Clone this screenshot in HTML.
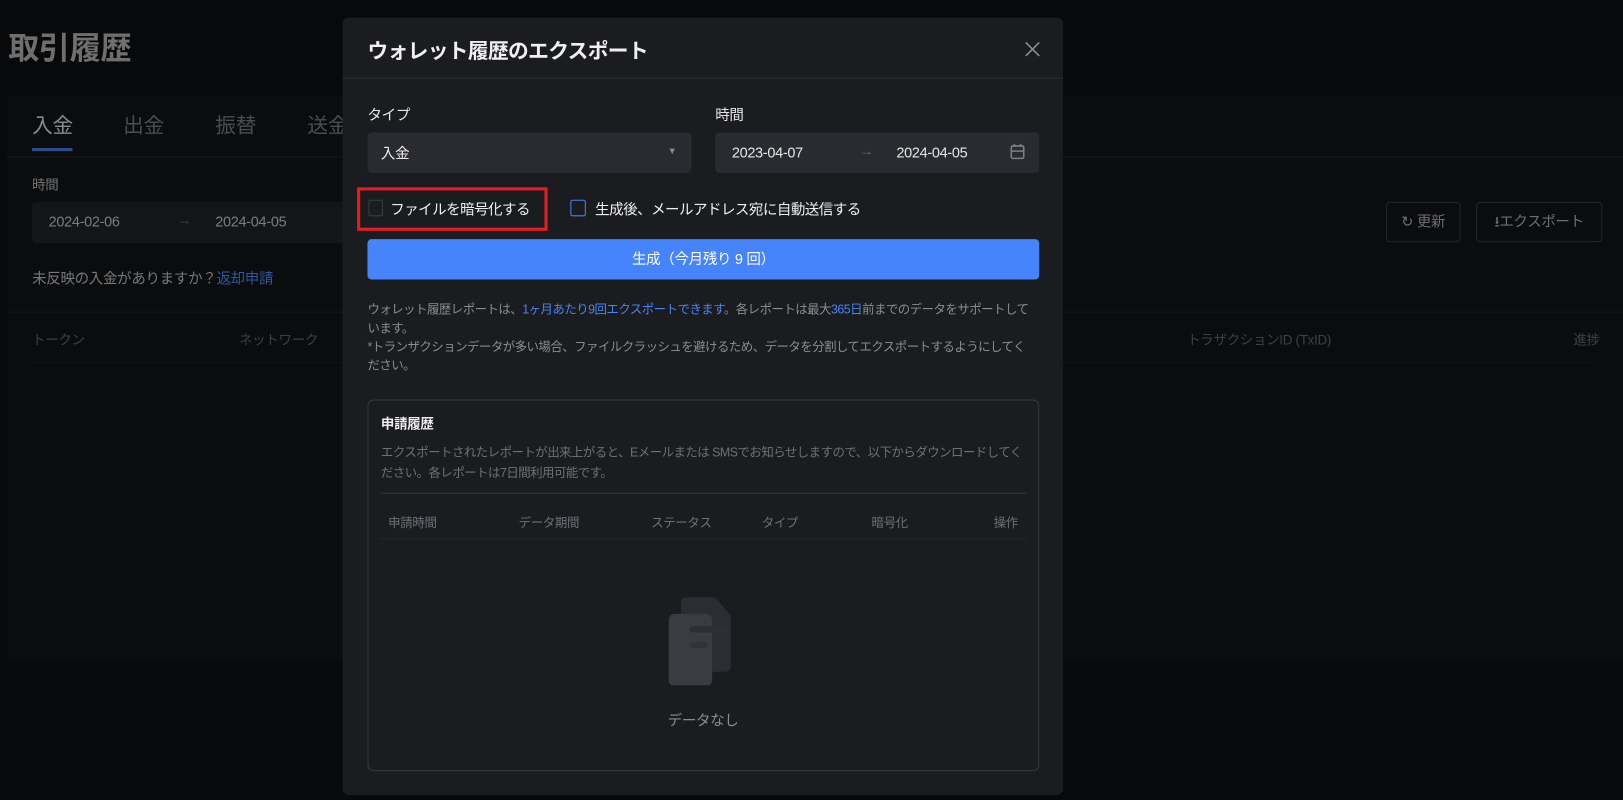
<!DOCTYPE html>
<html><head><meta charset="utf-8"><style>
*{box-sizing:border-box;margin:0;padding:0}
body{width:1623px;height:800px;background:#08090a;font-family:"Liberation Sans","Noto Sans CJK JP",sans-serif;color:#888;overflow:hidden;letter-spacing:-0.3px}
#w{position:relative;width:1568px;height:773px;transform:scale(1.0351);transform-origin:0 0}
.abs{position:absolute}
.panel{left:7px;top:92px;width:1570px;height:546px;background:#0b0c0e;border-radius:6px}
.modal{left:331px;top:17px;width:696px;height:751px;background:#1b1c20;border-radius:6px}
.in{background:#2a2b30;border-radius:4px}
</style></head><body><div id="w">
<div class="abs" style="left:8px;top:22px;font-size:30px;font-weight:bold;color:#6f6f70">取引履歴</div>
<div class="abs panel"></div>
<div class="abs" style="left:31px;top:105px;font-size:20px;color:#8a8a8a">入金</div>
<div class="abs" style="left:31px;top:143px;width:39px;height:3px;background:#2f4c8a"></div>
<div class="abs" style="left:119px;top:105px;font-size:20px;color:#4a4c50">出金</div>
<div class="abs" style="left:208px;top:105px;font-size:20px;color:#4a4c50">振替</div>
<div class="abs" style="left:297px;top:105px;font-size:20px;color:#4a4c50">送金</div>
<div class="abs" style="left:7px;top:151px;width:1570px;height:1px;background:#16171a"></div>
<div class="abs" style="left:31px;top:168px;font-size:13px;color:#777">時間</div>
<div class="abs" style="left:31px;top:195px;width:310px;height:40px;background:#141518;border-radius:4px"></div>
<div class="abs" style="left:47px;top:206px;font-size:14px;color:#7c7c7c">2024-02-06</div>
<div class="abs" style="left:171px;top:204px;font-size:14px;color:#444">→</div>
<div class="abs" style="left:208px;top:206px;font-size:14px;color:#7c7c7c">2024-04-05</div>
<div class="abs" style="left:31px;top:259px;font-size:14px;color:#777">未反映の入金がありますか？<span style="color:#2f57a3">返却申請</span></div>
<div class="abs" style="left:7px;top:301px;width:1570px;height:1px;background:#16171a"></div>
<div class="abs" style="left:31px;top:318px;font-size:13px;color:#3e4044">トークン</div>
<div class="abs" style="left:231px;top:318px;font-size:13px;color:#3e4044">ネットワーク</div>
<div class="abs" style="left:1147px;top:318px;font-size:13px;color:#3e4044">トラザクションID (TxID)</div>
<div class="abs" style="left:1520px;top:318px;font-size:13px;color:#3e4044">進捗</div>
<div class="abs" style="left:31px;top:350px;width:1512px;height:1px;background:#131416"></div>
<div class="abs" style="left:1339px;top:195px;width:72px;height:39px;border:1px solid #222428;border-radius:4px;font-size:14px;color:#6e6e6e;line-height:37px;text-align:center">↻ 更新</div>
<div class="abs" style="left:1426px;top:195px;width:122px;height:39px;border:1px solid #222428;border-radius:4px;font-size:14px;color:#6e6e6e;line-height:37px;text-align:center">⭳エクスポート</div>

<div class="abs modal"></div>
<div class="abs" style="left:355px;top:33px;font-size:20px;font-weight:bold;color:#f0f0f0;letter-spacing:-0.6px">ウォレット履歴のエクスポート</div>
<svg class="abs" style="left:990px;top:40px" width="15" height="15" viewBox="0 0 15 15"><path d="M1 1L14 14M14 1L1 14" stroke="#8a8d94" stroke-width="1.5"/></svg>
<div class="abs" style="left:331px;top:75px;width:696px;height:1px;background:#2e3035"></div>
<div class="abs" style="left:355px;top:101px;font-size:14px;color:#e6e6e6">タイプ</div>
<div class="abs" style="left:691px;top:101px;font-size:14px;color:#e6e6e6">時間</div>
<div class="abs in" style="left:355px;top:128px;width:313px;height:39px"></div>
<div class="abs" style="left:368px;top:138px;font-size:14px;color:#eee">入金</div>
<div class="abs" style="left:645px;top:141px;font-size:9px;color:#888">▼</div>
<div class="abs in" style="left:691px;top:128px;width:313px;height:39px"></div>
<div class="abs" style="left:707px;top:139px;font-size:14px;color:#e6e6e6">2023-04-07</div>
<div class="abs" style="left:830px;top:137px;font-size:14px;color:#666">→</div>
<div class="abs" style="left:866px;top:139px;font-size:14px;color:#e6e6e6">2024-04-05</div>
<svg class="abs" style="left:975px;top:138px" width="16" height="17" viewBox="0 0 16 17"><rect x="2" y="3" width="12" height="12" rx="1.5" fill="none" stroke="#7d808a" stroke-width="1.5"/><path d="M2 8H14M5 1V4M11 1V4" stroke="#7d808a" stroke-width="1.5"/></svg>
<div class="abs" style="left:345px;top:181px;width:184px;height:42px;border:3px solid #e51c23"></div>
<div class="abs" style="left:356px;top:193px;width:14px;height:16px;border:1px solid #3a3c42;border-radius:2px"></div>
<div class="abs" style="left:377px;top:192px;font-size:14px;color:#eee;letter-spacing:-0.5px">ファイルを暗号化する</div>
<div class="abs" style="left:551px;top:193px;width:15px;height:16px;border:1px solid #4580ff;border-radius:2px"></div>
<div class="abs" style="left:575px;top:192px;font-size:14px;color:#eee;letter-spacing:-0.5px">生成後、メールアドレス宛に自動送信する</div>
<div class="abs" style="left:355px;top:231px;width:649px;height:39px;background:#4584fa;border-radius:4px;color:#fff;font-size:14px;text-align:center;line-height:39px">生成（今月残り 9 回）</div>
<div class="abs" style="left:355px;top:290px;width:642px;font-size:12px;line-height:18px;color:#8a8c92;letter-spacing:-0.5px">ウォレット履歴レポートは、<span style="color:#4a84f0">1ヶ月あたり9回エクスポートできます</span>。各レポートは最大<span style="color:#4a84f0">365日</span>前までのデータをサポートしています。<br>*トランザクションデータが多い場合、ファイルクラッシュを避けるため、データを分割してエクスポートするようにしてください。</div>
<div class="abs" style="left:355px;top:386px;width:649px;height:359px;border:1px solid #35373c;border-radius:6px"></div>
<div class="abs" style="left:368px;top:399px;font-size:13px;font-weight:bold;color:#eee">申請履歴</div>
<div class="abs" style="left:368px;top:427px;width:626px;font-size:12px;line-height:20px;color:#6e7076;letter-spacing:-0.5px">エクスポートされたレポートが出来上がると、Eメールまたは SMSでお知らせしますので、以下からダウンロードしてください。各レポートは7日間利用可能です。</div>
<div class="abs" style="left:368px;top:476px;width:624px;height:1px;background:#35373c"></div>
<div class="abs" style="left:375px;top:496px;font-size:12px;color:#6e7076">申請時間</div>
<div class="abs" style="left:501px;top:496px;font-size:12px;color:#6e7076">データ期間</div>
<div class="abs" style="left:629px;top:496px;font-size:12px;color:#6e7076">ステータス</div>
<div class="abs" style="left:736px;top:496px;font-size:12px;color:#6e7076">タイプ</div>
<div class="abs" style="left:842px;top:496px;font-size:12px;color:#6e7076">暗号化</div>
<div class="abs" style="left:960px;top:496px;font-size:12px;color:#6e7076">操作</div>
<div class="abs" style="left:368px;top:520px;width:624px;height:1px;background:#26282c"></div>
<svg class="abs" style="left:646px;top:577px" width="72" height="85" viewBox="0 0 72 85"><path d="M12 6Q12 0 18 0H45L60 18V66Q60 72 54 72H18Q12 72 12 66Z" fill="#2c2d33"/><rect x="0" y="16" width="42" height="70" rx="6" fill="#3a3b43"/><rect x="20" y="28" width="38" height="6" rx="3" fill="#2e2f36"/><rect x="20" y="43" width="18" height="6" rx="3" fill="#33343b"/></svg>
<div class="abs" style="left:645px;top:686px;font-size:14px;color:#8a8c92">データなし</div>
</div></body></html>
